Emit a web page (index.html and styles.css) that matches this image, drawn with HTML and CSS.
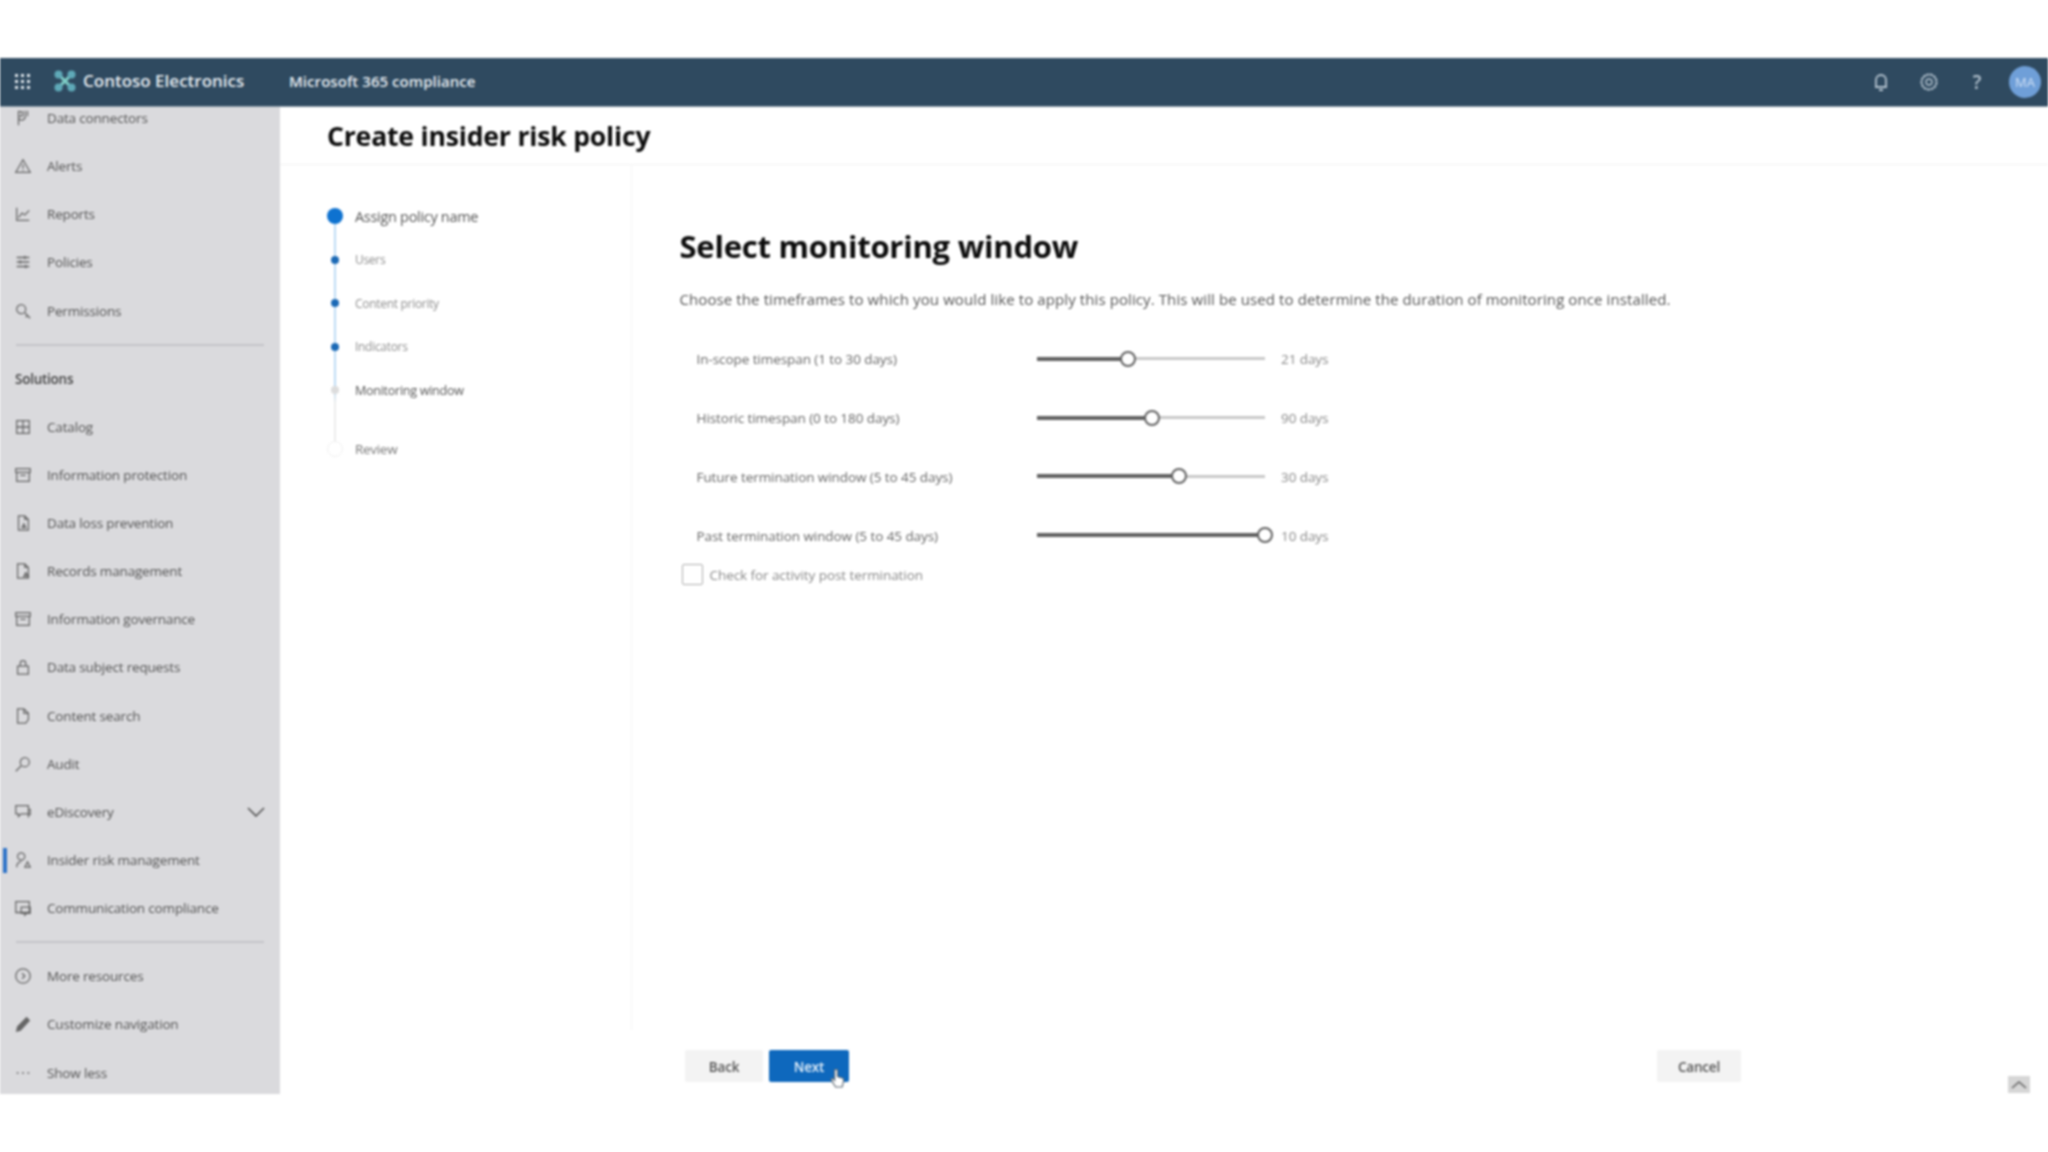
FILE: index.html
```html
<!DOCTYPE html>
<html lang="en">
<head>
<meta charset="utf-8">
<title>Create insider risk policy</title>
<link rel="stylesheet" href="styles.css">
</head>
<body>
<div class="app">
  <header class="topbar">
    <svg class="waffle" viewBox="0 0 16 16"><g fill="#dfe6ec"><rect x="0" y="0" width="3" height="3"/><rect x="6" y="0" width="3" height="3"/><rect x="12" y="0" width="3" height="3"/><rect x="0" y="6" width="3" height="3"/><rect x="6" y="6" width="3" height="3"/><rect x="12" y="6" width="3" height="3"/><rect x="0" y="12" width="3" height="3"/><rect x="6" y="12" width="3" height="3"/><rect x="12" y="12" width="3" height="3"/></g></svg>
    <svg class="logo" viewBox="0 0 24 24"><path d="M6 6L18 18M18 6L6 18" stroke="#7fcfc8" stroke-width="3"/><circle cx="5.5" cy="5.5" r="4" fill="#5fa9b8"/><circle cx="18.5" cy="5.5" r="4" fill="#5fa9b8"/><circle cx="5.5" cy="18.5" r="4" fill="#5fa9b8"/><circle cx="18.5" cy="18.5" r="4" fill="#5fa9b8"/></svg>
    <span class="brand">Contoso Electronics</span>
    <span class="product">Microsoft 365 compliance</span>
    <div class="top-actions">
      <svg class="top-icon" viewBox="0 0 20 20" fill="none" stroke="#b4c3cf" stroke-width="1.8"><path d="M5 15V8a5 5 0 0 1 10 0v7zM4 15h12M8 18h4"/></svg>
      <svg class="top-icon" viewBox="0 0 20 20" fill="none" stroke="#b4c3cf" stroke-width="2"><circle cx="10" cy="10" r="7.5" stroke-dasharray="3 .6"/><circle cx="10" cy="10" r="3" stroke-width="1.4"/></svg>
      <span class="help">?</span>
      <span class="avatar">MA</span>
    </div>
  </header>
  <div class="workspace">
    <nav class="sidebar">
      <ul class="nav-list nav-first">
        <li class="nav-item"><svg class="ni" viewBox="0 0 20 20"><path d="M5 2v16M5 3h4v5H5M12 2v5a3 3 0 0 1-7 3M15 2v6"/></svg>Data connectors</li>
        <li class="nav-item"><svg class="ni" viewBox="0 0 20 20"><path d="M10 3l8 14H2zM10 8v5M10 14.500v1"/></svg>Alerts</li>
        <li class="nav-item"><svg class="ni" viewBox="0 0 20 20"><path d="M3 3v14h14M5 14l4-5 3 2 5-5"/></svg>Reports</li>
        <li class="nav-item"><svg class="ni" viewBox="0 0 20 20"><path d="M3 5h14M3 10h14M3 15h14M12 3v4M7 8v4M13 13v4"/></svg>Policies</li>
        <li class="nav-item"><svg class="ni" viewBox="0 0 20 20"><circle cx="8" cy="8" r="5"/><path d="M12 12l6 6M15 15l-2 2"/></svg>Permissions</li>
      </ul>
      <hr class="nav-rule nav-rule-a">
      <div class="nav-heading">Solutions</div>
      <ul class="nav-list">
        <li class="nav-item"><svg class="ni" viewBox="0 0 20 20"><path d="M3 3h14v14H3zM3 10h14M10 3v14"/></svg>Catalog</li>
        <li class="nav-item"><svg class="ni" viewBox="0 0 20 20"><path d="M2 3h16v4H2zM3 7v10h14V7M7 10.500h6"/></svg>Information protection</li>
        <li class="nav-item"><svg class="ni" viewBox="0 0 20 20"><path d="M5 18V2h7l4 4v12zM12 2v4h4M9 15l2-4 2 4z"/></svg>Data loss prevention</li>
        <li class="nav-item"><svg class="ni" viewBox="0 0 20 20"><path d="M4 18V2h8l4 4v12zM12 2v4h4M11 16l2-4 3 4z"/></svg>Records management</li>
        <li class="nav-item"><svg class="ni" viewBox="0 0 20 20"><path d="M2 3h16v4H2zM3 7v10h14V7M7 10.500h6"/></svg>Information governance</li>
        <li class="nav-item"><svg class="ni" viewBox="0 0 20 20"><path d="M4 9h12v9H4zM7 9V6a3 3 0 0 1 6 0v3"/></svg>Data subject requests</li>
        <li class="nav-item"><svg class="ni" viewBox="0 0 20 20"><path d="M4 18V2h7l5 5v7l-3 4zM11 2v5h5"/></svg>Content search</li>
        <li class="nav-item"><svg class="ni" viewBox="0 0 20 20"><circle cx="12" cy="8" r="5"/><path d="M8 12l-6 6"/></svg>Audit</li>
        <li class="nav-item"><svg class="ni" viewBox="0 0 20 20"><path d="M2 3h14v9H8l-3 3v-3H2zM16 7h2v6h-2v3"/></svg>eDiscovery<svg class="chev" viewBox="0 0 18 10"><path d="M1 1l8 8 8-8"/></svg></li>
        <li class="nav-item nav-active"><svg class="ni" viewBox="0 0 20 20"><circle cx="8" cy="6" r="4"/><path d="M3 18c0-4 2-6 5-6M12 18l3-6 3 6z"/></svg>Insider risk management</li>
        <li class="nav-item"><svg class="ni" viewBox="0 0 20 20"><path d="M2 3h15v12H2zM8 9h10v7h-4l-2 2v-2H8z"/></svg>Communication compliance</li>
      </ul>
      <hr class="nav-rule nav-rule-b">
      <ul class="nav-list">
        <li class="nav-item"><svg class="ni" viewBox="0 0 20 20"><circle cx="10" cy="10" r="8"/><path d="M9 7l3 3-3 3"/></svg>More resources</li>
        <li class="nav-item"><svg class="ni" viewBox="0 0 20 20"><path class="ni-solid" d="M3 18l1-5L14 3l3 3L7 17z"/></svg>Customize navigation</li>
        <li class="nav-item"><svg class="ni" viewBox="0 0 20 20"><path d="M3 10h2M9 10h2M15 10h2"/></svg>Show less</li>
      </ul>
    </nav>
    <main class="content">
      <h1 class="page-title">Create insider risk policy</h1>
      <div class="wizard">
        <ol class="stepper">
          <li class="step step-first"><span class="dot dot-big"></span>Assign policy name</li>
          <li class="step"><span class="dot"></span>Users</li>
          <li class="step"><span class="dot"></span>Content priority</li>
          <li class="step"><span class="dot"></span>Indicators</li>
          <li class="step step-strong"><span class="dot dot-pending"></span>Monitoring window</li>
          <li class="step step-review"><span class="dot dot-future"></span>Review</li>
        </ol>
        <section class="form">
          <h2 class="form-title">Select monitoring window</h2>
          <p class="form-desc">Choose the timeframes to which you would like to apply this policy. This will be used to determine the duration of monitoring once installed.</p>
          <div class="slider-row"><span class="slider-label">In-scope timespan (1 to 30 days)</span><div class="track"><div class="fill" style="width:39.9%"><span class="thumb"></span></div></div><span class="slider-value">21 days</span></div>
          <div class="slider-row"><span class="slider-label">Historic timespan (0 to 180 days)</span><div class="track"><div class="fill" style="width:50.4%"><span class="thumb"></span></div></div><span class="slider-value">90 days</span></div>
          <div class="slider-row"><span class="slider-label">Future termination window (5 to 45 days)</span><div class="track"><div class="fill" style="width:62.3%"><span class="thumb"></span></div></div><span class="slider-value">30 days</span></div>
          <div class="slider-row"><span class="slider-label">Past termination window (5 to 45 days)</span><div class="track"><div class="fill" style="width:100%"><span class="thumb"></span></div></div><span class="slider-value">10 days</span></div>
          <label class="check-row"><span class="checkbox"></span>Check for activity post termination</label>
        </section>
      </div>
      <footer class="actions">
        <button class="btn btn-back">Back</button>
        <button class="btn btn-next">Next</button>
        <button class="btn btn-cancel">Cancel</button>
      </footer>
      <svg class="cursor" viewBox="0 0 16 20"><path d="M5 1.500a1.500 1.500 0 0 1 3 0V8l5 1.500c1.500.5 2 1.500 1.500 3L13 19H6L1.500 12c-.8-1.500 1-2.500 2-1.500L5 12z" fill="#fff" stroke="#5a6570" stroke-width="1.200"/></svg>
      <button class="scroll-up"><svg viewBox="0 0 16 10"><path d="M1 8l7-6 7 6"/></svg></button>
    </main>
  </div>
</div>
</body>
</html>
```

FILE: styles.css
```css
* { box-sizing: border-box; }
html, body { margin: 0; padding: 0; background: #fff; }
body { font-family: "Open Sans", "Noto Sans", sans-serif; color: #444; }
.app {
  width: 2048px;
  height: 1152px;
  padding: 58px 0;
  display: flex;
  flex-direction: column;
  filter: blur(0.8px);
  overflow: hidden;
}
.topbar {
  height: 49px;
  flex: none;
  background: #2f4a60;
  display: flex;
  align-items: center;
  color: #e6ecf1;
  border-bottom: 1px solid #8a9aa8;
}
.waffle { width: 16px; height: 16px; margin-left: 15px; }
.logo { width: 24px; height: 24px; margin-left: 22px; margin-bottom: 2px; }
.brand { font-size: 17px; font-weight: 600; margin-left: 6px; padding-bottom: 4px; width: 206px; letter-spacing: 0; white-space: nowrap; }
.product { font-size: 15px; font-weight: 600; padding-bottom: 2px; letter-spacing: 0.05px; white-space: nowrap; }
.top-actions { margin-left: auto; display: flex; align-items: center; }
.top-icon { width: 20px; height: 20px; margin-right: 28px; }
.help { width: 20px; margin-right: 22px; text-align: center; font-size: 19px; font-weight: 600; color: #b4c3cf; }
.avatar {
  width: 32px; height: 32px; margin-right: 7px;
  border-radius: 50%;
  background: #6f9fd8;
  color: #cfe0f5;
  font-size: 13px;
  display: flex; align-items: center; justify-content: center;
}
.workspace { flex: 1; display: flex; min-height: 0; }
.sidebar {
  width: 280px;
  flex: none;
  background: #dadadd;
  overflow: hidden;
  font-size: 13.5px;
  color: #555;
}
.nav-list { list-style: none; margin: 0; padding: 0; }
.nav-first { margin-top: -13px; }
.nav-item {
  height: 48.15px;
  display: flex;
  align-items: center;
  padding-left: 14px;
  position: relative;
  letter-spacing: -0.17px;
  white-space: nowrap;
}
.ni {
  width: 18px; height: 18px;
  margin-right: 15px;
  flex: none;
  fill: none;
  stroke: #666;
  stroke-width: 1.4;
}
.ni .ni-solid { fill: #666; }
.chev { width: 18px; height: 10px; margin-left: auto; margin-right: 15px; fill: none; stroke: #555; stroke-width: 1.6; }
.nav-active::before {
  content: "";
  position: absolute;
  left: 3px; top: 12px;
  width: 4px; height: 25px;
  background: #2f74c8;
}
.nav-rule { border: 0; border-top: 2px solid #c4c4c8; margin: 0 16px; height: 0; }
.nav-rule-a { margin-top: 9px; }
.nav-rule-b { margin-top: 9px; margin-bottom: 9px; }
.nav-heading { font-size: 13.5px; font-weight: 600; color: #444; height: 57px; padding-top: 9px; line-height: 49px; padding-left: 15px; letter-spacing: -0.25px; }
.content { flex: 1; min-width: 0; display: flex; flex-direction: column; position: relative; }
.page-title {
  margin: 0;
  height: 58px;
  flex: none;
  padding-left: 47px;
  font-size: 26.6px;
  line-height: 58px;
  font-weight: 700;
  color: #0c0c0c;
  letter-spacing: -0.2px;
  border-bottom: 1px solid #f2f2f2;
}
.wizard { flex: 1; display: flex; min-height: 0; }
.stepper {
  width: 352px;
  flex: none;
  margin: 0;
  padding: 29px 0 0 47px;
  list-style: none;
  position: relative;
  font-size: 12px;
  color: #8e8e8e;
  border-right: 1px solid #f5f5f5;
}
.stepper::before {
  content: "";
  position: absolute;
  left: 54px; top: 52px;
  width: 2px; height: 232px;
  background: linear-gradient(#bcdcf5 0 74%, #ececec 80%);
}
.step { height: 43.5px; display: flex; align-items: center; position: relative; padding-left: 28px; padding-top: 1px; letter-spacing: -0.3px; white-space: nowrap; }
.step-first { color: #555; font-size: 14.5px; font-weight: 500; }
.step-strong { color: #555; font-size: 12.6px; }
.step-review { margin-top: 15px; font-size: 13.5px; color: #777; }
.dot { position: absolute; left: 4px; top: 18px; width: 8px; height: 8px; border-radius: 50%; background: #1b69b5; }
.dot-big { left: 0; top: 14px; width: 16px; height: 16px; background: #0e72d0; }
.dot-pending { background: #dcdcdc; }
.dot-future { left: 0; top: 14px; width: 16px; height: 16px; background: #fff; border: 1px solid #f0f0f0; }
.form { flex: 1; padding: 61px 0 0 47.5px; min-width: 0; }
.form-title { margin: 0; height: 40px; line-height: 40px; font-size: 31px; font-weight: 700; color: #0c0c0c; letter-spacing: -0.22px; white-space: nowrap; }
.form-desc { margin: 23px 0 20.500px; height: 20px; line-height: 20px; font-size: 15px; color: #555; letter-spacing: 0.1px; white-space: nowrap; }
.slider-row { height: 58.800px; display: flex; align-items: center; font-size: 13.5px; color: #666; letter-spacing: -0.07px; white-space: nowrap; }
.slider-label { width: 357.5px; flex: none; padding-left: 17px; padding-top: 1px; }
.track { width: 228px; height: 3px; flex: none; background: #c9c9c9; }
.fill { height: 4px; margin-top: -0.500px; background: #616161; display: flex; align-items: center; justify-content: flex-end; }
.thumb { width: 16px; height: 16px; margin-right: -8px; flex: none; border-radius: 50%; background: #fff; border: 2px solid #616161; }
.slider-value { margin-left: 16px; padding-top: 1px; color: #888; }
.check-row { display: flex; align-items: center; height: 22px; margin-left: 2px; margin-top: -1px; font-size: 13.5px; color: #888; letter-spacing: -0.07px; white-space: nowrap; }
.checkbox { width: 21px; height: 21px; margin-right: 7px; border: 1px solid #adadad; border-radius: 2px; flex: none; }
.actions { height: 64px; flex: none; display: flex; align-items: flex-start; padding: 20px 307px 0 405px; }
.btn { height: 32px; border: 0; border-radius: 2px; font-family: inherit; font-size: 13.5px; font-weight: 600; letter-spacing: -0.2px; padding: 1px 0 0; }
.btn-back { width: 78px; background: #f3f3f3; color: #555; }
.btn-next { width: 80px; margin-left: 6px; background: #0e68bd; color: #e8f2fb; }
.btn-cancel { width: 84px; margin-left: auto; background: #f3f3f3; color: #555; }
.cursor { position: absolute; left: 550px; top: 962px; width: 15px; height: 19px; }
.scroll-up { position: absolute; right: 18px; bottom: 1px; width: 22px; height: 17px; border: 0; padding: 3px 3px; background: #d6d6d6; }
.scroll-up svg { display: block; width: 16px; height: 10px; fill: none; stroke: #666; stroke-width: 1.6; }
```
